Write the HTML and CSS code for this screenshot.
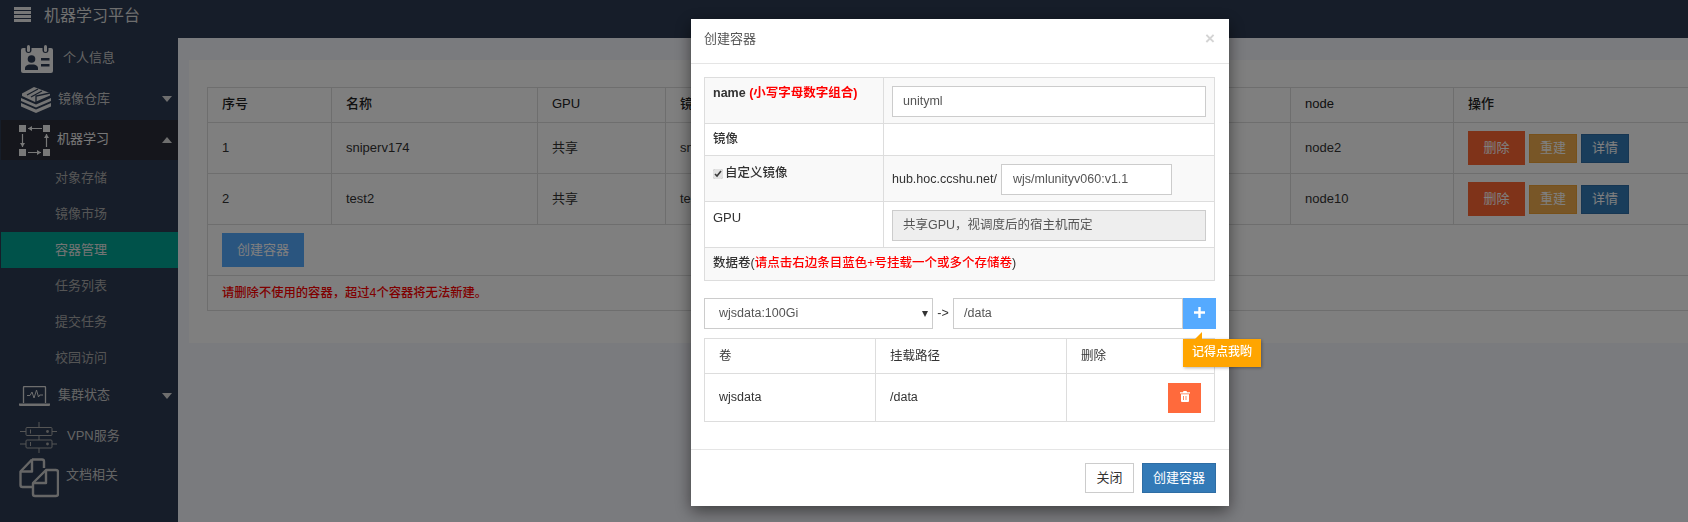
FILE: index.html
```html
<!DOCTYPE html>
<html lang="zh-CN">
<head>
    <meta charset="UTF-8">
    <meta name="viewport" content="width=device-width, initial-scale=1.0">
    <title>机器学习平台</title>
    <link rel="stylesheet" href="styles.css">
</head>
<body>
    <header class="topbar">
        <svg class="menu-icon" viewBox="0 0 17 15" width="17" height="15"><path d="M0 0h17v3H0zM0 4h17v3H0zM0 8h17v3H0zM0 12h17v3H0z" fill="#eee"/></svg>
        <span class="brand">机器学习平台</span>
    </header>
    <div class="layout">
        <aside class="sidebar">
            <a class="side-item side-info">
                <svg class="side-icon" width="32" height="28" viewBox="0 0 32 28"><rect y="3" width="32" height="25" rx="2" fill="#f4f4f4"/><rect x="4.500" y="-1" width="6" height="9" rx="3" fill="#2c3a52"/><rect x="21.500" y="-1" width="6" height="9" rx="3" fill="#2c3a52"/><rect x="6" y="0" width="3" height="7" rx="1.500" fill="#f4f4f4"/><rect x="23" y="0" width="3" height="7" rx="1.500" fill="#f4f4f4"/><circle cx="10.500" cy="14" r="3.800" fill="#2c3a52"/><path d="M4 25v-2c0-2 2-3 4-3.500h5c2 .5 4 1.500 4 3.500v2z" fill="#2c3a52"/><rect x="20" y="13" width="8.500" height="2.500" fill="#2c3a52"/><rect x="20" y="19" width="8.500" height="2.500" fill="#2c3a52"/></svg>
                <span>个人信息</span>
            </a>
            <a class="side-item side-repo">
                <svg class="side-icon" width="30" height="26" viewBox="0 0 30 26"><path d="M13 0l16 6v2.500L14 15 1 9V6.500z" fill="#e8e8e8"/><path d="M6 8l11-6M10 10l11-6M15 15V9l14-3" fill="none" stroke="#2c3a52" stroke-width="1.300"/><path d="M0 11l15 6.500L30 11v3l-15 6.500L0 14z" fill="#e8e8e8"/><path d="M0 16l15 6.500L30 16v3.500L15 26 0 19.500z" fill="#e8e8e8"/></svg>
                <span>镜像仓库</span>
                <i class="caret"></i>
            </a>
            <a class="side-item side-ml">
                <svg class="side-icon" width="31" height="31" viewBox="0 0 31 31"><path d="M0 0h7v7H0zM24 0h7v7h-7zM0 24h7v7H0zM24 24h7v7h-7z" fill="#f0f0f0"/><path d="M23 3.500H9M3.500 9v13M9 27.500h13M27.500 22V9" stroke="#f0f0f0" stroke-width="1.200"/><path d="M9 3.500l4-2.500v5zM3.500 22L1 18h5zM22 27.500L18 25v5zM27.500 9L25 13h5z" fill="#f0f0f0"/></svg>
                <span>机器学习</span>
                <i class="caret caret-up"></i>
            </a>
            <a class="side-sub">对象存储</a>
            <a class="side-sub">镜像市场</a>
            <a class="side-sub active">容器管理</a>
            <a class="side-sub">任务列表</a>
            <a class="side-sub">提交任务</a>
            <a class="side-sub">校园访问</a>
            <a class="side-item side-status">
                <svg class="side-icon" width="31" height="20" viewBox="0 0 31 20"><path d="M4.500 17V1.500a1 1 0 0 1 1-1h20a1 1 0 0 1 1 1V17" fill="none" stroke="#ddd" stroke-width="1.300"/><path d="M0 17.500h31V19a1 1 0 0 1-1 1H1a1 1 0 0 1-1-1z" fill="#ddd"/><path d="M8 9.500h3l2-3.500 2 6 2.500-8 2 7 1.200-2H24" fill="none" stroke="#ddd"/></svg>
                <span>集群状态</span>
                <i class="caret"></i>
            </a>
            <a class="side-item side-vpn">
                <svg class="side-icon" width="37" height="31" viewBox="0 0 37 31"><g fill="none" stroke="#aaa"><rect x="6" y="5.500" width="26" height="8" rx="1"/><rect x="6" y="18" width="26" height="8" rx="1"/><path d="M19 0v5.500M19 13.500V18M19 26v5M0 9.500h6M32 9.500h5M0 22h6M32 22h5M10.500 7.500v4M10.500 20v4"/></g><circle cx="27.500" cy="9.500" r="1.400" fill="#aaa"/><circle cx="27.500" cy="22" r="1.400" fill="#aaa"/></svg>
                <span>VPN服务</span>
            </a>
            <a class="side-item side-docs">
                <svg class="side-icon" width="40" height="40" viewBox="0 0 40 40"><g fill="none" stroke="#ccc" stroke-width="2.400" stroke-linejoin="round"><path d="M13 1.500h10a2 2 0 0 1 2 2V10M13 1.500L1.500 13.500V27a2 2 0 0 0 2 2H14"/><path d="M13 1.500v12H1.500"/><path d="M27 12h10a2 2 0 0 1 2 2v22a2 2 0 0 1-2 2H16a2 2 0 0 1-2-2V25z"/><path d="M27 12v13H14"/></g></svg>
                <span>文档相关</span>
            </a>
        </aside>
        <main class="content">
            <section class="panel">
                <table class="grid">
                    <colgroup><col class="c-no"><col class="c-name"><col class="c-gpu"><col class="c-image"><col class="c-node"><col class="c-ops"></colgroup>
                    <thead>
                        <tr><th>序号</th><th>名称</th><th>GPU</th><th>镜像</th><th>node</th><th>操作</th></tr>
                    </thead>
                    <tbody>
                        <tr>
                            <td>1</td><td>sniperv174</td><td>共享</td><td>snip</td><td>node2</td>
                            <td><button class="btn btn-del">删除</button><button class="btn btn-warn">重建</button><button class="btn btn-info">详情</button></td>
                        </tr>
                        <tr>
                            <td>2</td><td>test2</td><td>共享</td><td>test2</td><td>node10</td>
                            <td><button class="btn btn-del">删除</button><button class="btn btn-warn">重建</button><button class="btn btn-info">详情</button></td>
                        </tr>
                        <tr><td colspan="6" class="cell-create"><button class="btn btn-create">创建容器</button></td></tr>
                        <tr><td colspan="6" class="cell-note">请删除不使用的容器，超过4个容器将无法新建。</td></tr>
                    </tbody>
                </table>
            </section>
        </main>
    </div>

    <div class="backdrop"></div>

    <div class="modal">
        <div class="modal-head">
            <h4>创建容器</h4>
            <span class="close">×</span>
        </div>
        <div class="modal-body">
            <table class="form-table">
                <colgroup><col class="f-label"><col></colgroup>
                <tr class="odd">
                    <th><b>name</b> <b class="red">(小写字母数字组合)</b></th>
                    <td><input class="field" type="text" value="unityml"></td>
                </tr>
                <tr class="row-image">
                    <th>镜像</th>
                    <td></td>
                </tr>
                <tr class="odd">
                    <th><label class="check"><input type="checkbox" checked>自定义镜像</label></th>
                    <td><div class="custom"><span>hub.hoc.ccshu.net/</span><input class="field field-short" type="text" value="wjs/mlunityv060:v1.1"></div></td>
                </tr>
                <tr>
                    <th class="plain">GPU</th>
                    <td><input class="field" type="text" value="共享GPU，视调度后的宿主机而定" disabled></td>
                </tr>
                <tr class="odd row-volume">
                    <th colspan="2">数据卷(<b class="red">请点击右边条目蓝色+号挂载一个或多个存储卷</b>)</th>
                </tr>
            </table>

            <div class="mount">
                <div class="select">wjsdata:100Gi<i></i></div>
                <span class="arrow">-&gt;</span>
                <input class="field mount-path" type="text" value="/data">
                <button class="plus">
                    <svg width="11" height="11" viewBox="0 0 11 11"><path d="M4.300 0h2.400v4.300H11v2.400H6.700V11H4.300V6.700H0V4.300h4.300z" fill="#fff"/></svg>
                </button>
                <div class="tip">记得点我哟</div>
            </div>

            <table class="volumes">
                <colgroup><col class="v-a"><col class="v-b"><col></colgroup>
                <tr><th>卷</th><th>挂载路径</th><th>删除</th></tr>
                <tr>
                    <td>wjsdata</td><td>/data</td>
                    <td class="cell-trash">
                        <button class="trash">
                            <svg width="10" height="11" viewBox="0 0 10 11"><path d="M3.500 0h3l.6 1.200H10v1.300H0V1.200h2.900zM1 3.300h8V10a1 1 0 0 1-1 1H2a1 1 0 0 1-1-1zM3 5v4h.8V5zm2.600 0v4h.8V5z" fill="#fff" fill-rule="evenodd"/></svg>
                        </button>
                    </td>
                </tr>
            </table>
        </div>
        <div class="modal-foot">
            <button class="foot-btn foot-close">关闭</button>
            <button class="foot-btn foot-ok">创建容器</button>
        </div>
    </div>
</body>
</html>
```

FILE: styles.css
```css
* {
    box-sizing: border-box;
}
html, body {
    height: 100%;
}
body {
    margin: 0;
    overflow: hidden;
    background-color: #f5f6fc;
    font-family: "Liberation Sans", "Noto Sans CJK SC", sans-serif;
    font-size: 13px;
    line-height: 1.2;
    color: #333;
}
button {
    font-family: inherit;
}

/* top bar */
.topbar {
    height: 38px;
    display: flex;
    align-items: flex-start;
    padding: 7px 0 0 14px;
    background-color: #2c3a52;
}
.menu-icon {
    margin-right: 13px;
}
.brand {
    margin-top: -1px;
    font-size: 16px;
    color: #ddd;
}

/* sidebar */
.layout {
    display: flex;
    height: calc(100% - 38px);
}
.sidebar {
    width: 178px;
    flex: none;
    padding-left: 1px;
    background-color: #2c3a52;
    color: #c8c8c8;
}
.side-item {
    position: relative;
    height: 40px;
    display: flex;
    align-items: center;
}
.side-icon {
    flex: none;
}
.side-info {
    padding-left: 20px;
    gap: 10px;
}
.side-repo {
    height: 42px;
    padding-left: 20px;
    gap: 7px;
}
.side-info .side-icon, .side-repo .side-icon, .side-vpn .side-icon {
    margin-top: 2px;
}
.side-ml span, .side-status span, .side-docs span {
    padding-bottom: 2px;
}
.side-ml {
    padding-left: 18px;
    gap: 7px;
    background-color: #2a2c38;
    color: #f0f0f0;
}
.side-status {
    padding-left: 18px;
    gap: 8px;
}
.side-vpn {
    padding-left: 19px;
    gap: 10px;
}
.side-docs {
    padding-left: 18px;
    gap: 7px;
}
.side-docs .side-icon {
    margin-top: 4px;
}
.caret {
    position: absolute;
    right: 6px;
    top: 50%;
    margin-top: -3px;
    border-left: 5px solid transparent;
    border-right: 5px solid transparent;
    border-top: 6px solid #ddd;
}
.caret-up {
    border-top: 0;
    border-bottom: 6px solid #ddd;
}
.side-sub {
    display: block;
    height: 36px;
    line-height: 35px;
    padding-left: 54px;
    color: #aaa;
}
.side-sub.active {
    background-color: #00a594;
    color: #e8e8e8;
}

/* main area */
.content {
    flex: 1;
    min-width: 0;
    padding: 22px 0 0 11px;
    overflow: hidden;
}
.panel {
    width: 1520px;
    height: 283px;
    padding: 27px 18px;
    background-color: #fff;
}
.grid {
    width: 1500px;
    table-layout: fixed;
    border-collapse: collapse;
}
.c-no { width: 124px; }
.c-name { width: 206px; }
.c-gpu { width: 128px; }
.c-image { width: 625px; }
.c-node { width: 163px; }
.grid th, .grid td {
    border: 1px solid #ddd;
    padding: 0 14px;
    text-align: left;
}
.grid th {
    height: 35px;
    padding-bottom: 3px;
    font-weight: 500;
    color: #222;
}
.grid td {
    height: 51px;
}
.grid td.cell-note {
    height: 35px;
    color: #f00;
    font-size: 12.3px;
    font-weight: 500;
}
.btn {
    height: 29px;
    width: 48px;
    margin-right: 4px;
    padding: 0 0 3px;
    border: 1px solid transparent;
    font-size: 13px;
    color: #fff;
    vertical-align: middle;
}
.btn-del {
    width: 57px;
    height: 34px;
    background-color: #ff6633;
}
.btn-warn {
    background-color: #f0ad4e;
    border-color: #eea236;
}
.btn-info {
    background-color: #337ab7;
    border-color: #2e6da4;
}
.btn-create {
    width: 82px;
    height: 34px;
    background-color: #55aaff;
}

/* modal */
.backdrop {
    position: fixed;
    inset: 0;
    background-color: rgba(0, 0, 0, 0.5);
}
.modal {
    position: fixed;
    left: 691px;
    top: 19px;
    width: 538px;
    height: 487px;
    background-color: #fff;
    box-shadow: 0 5px 15px rgba(0, 0, 0, 0.5);
    font-size: 12.5px;
}
.modal-head {
    height: 45px;
    display: flex;
    align-items: center;
    justify-content: space-between;
    padding: 0 14px 4px 13px;
    border-bottom: 1px solid #e5e5e5;
}
.modal-head h4 {
    margin: 0;
    font-size: 13px;
    font-weight: normal;
    color: #555;
}
.close {
    font-size: 17px;
    font-weight: bold;
    color: #d4d4d4;
}
.modal-body {
    height: 385px;
    padding: 13px 14px 0 13px;
}
.form-table, .volumes {
    width: 511px;
    table-layout: fixed;
    border-collapse: collapse;
}
.f-label { width: 179px; }
.form-table th, .form-table td {
    border: 1px solid #ddd;
    padding: 8px 8px 6px;
    text-align: left;
    vertical-align: top;
}
.form-table .odd {
    background-color: #f9f9f9;
}
.form-table th {
    font-weight: 500;
}
.form-table th.plain {
    font-weight: normal;
    font-size: 13px;
}
.row-image th {
    height: 32px;
}
.row-volume th {
    height: 33px;
}
.red {
    color: #f00;
    font-weight: bold;
}
.row-volume .red {
    font-weight: 500;
}
.check {
    display: flex;
    align-items: center;
    padding-top: 2px;
}
.check input {
    margin: 0 2px 0 0;
    width: 10px;
    height: 10px;
    accent-color: #e2e2e2;
}
.field {
    display: block;
    width: 100%;
    height: 31px;
    padding: 0 10px 1px;
    border: 1px solid #ccc;
    font-family: inherit;
    font-size: 12.5px;
    color: #555;
    background-color: #fff;
}
.field:disabled {
    padding-bottom: 4px;
    background-color: #eee;
    color: #555;
}
.custom {
    display: flex;
    align-items: center;
    gap: 4px;
}
.field-short {
    width: 171px;
    flex: none;
    padding-left: 11px;
}

/* mount row */
.mount {
    position: relative;
    display: flex;
    align-items: center;
    margin-top: 17px;
    height: 31px;
    width: 512px;
}
.select {
    position: relative;
    width: 229px;
    height: 31px;
    line-height: 29px;
    padding-left: 14px;
    border: 1px solid #ccc;
    color: #555;
}
.select i {
    position: absolute;
    right: 4px;
    top: 12px;
    border-left: 3px solid transparent;
    border-right: 3px solid transparent;
    border-top: 6px solid #333;
}
.arrow {
    width: 20px;
    text-align: center;
}
.mount-path {
    width: 230px;
}
.plus {
    width: 33px;
    height: 31px;
    padding: 0;
    border: 0;
    background-color: #55aaff;
    flex: none;
}
.tip {
    position: absolute;
    left: 479px;
    top: 41px;
    width: 78px;
    height: 28px;
    padding-bottom: 2px;
    line-height: 26px;
    text-align: center;
    background-color: #ffa500;
    color: #fff;
    font-weight: 500;
    font-size: 12px;
    box-shadow: 1px 1px 3px rgba(0, 0, 0, 0.3);
}
.tip::before {
    content: "";
    position: absolute;
    left: 12px;
    top: -7px;
    border-left: 7px solid transparent;
    border-bottom: 7px solid #ffa500;
}

/* volumes table */
.volumes {
    margin-top: 9px;
}
.v-a { width: 171px; }
.v-b { width: 191px; }
.volumes th, .volumes td {
    border: 1px solid #ddd;
    padding: 0 14px;
    text-align: left;
    font-weight: normal;
}
.volumes th {
    height: 35px;
}
.volumes td {
    height: 48px;
}
.volumes td.cell-trash {
    text-align: right;
    padding-right: 13px;
}
.trash {
    width: 33px;
    height: 30px;
    padding: 0;
    border: 0;
    background-color: #ff6a3c;
    vertical-align: middle;
}

/* modal footer */
.modal-foot {
    height: 57px;
    display: flex;
    align-items: center;
    justify-content: flex-end;
    gap: 8px;
    padding-right: 13px;
    border-top: 1px solid #e5e5e5;
}
.foot-btn {
    height: 30px;
    padding: 0 0 3px;
    border: 1px solid #ccc;
    font-size: 13px;
    color: #333;
    background-color: #fff;
}
.foot-close {
    width: 49px;
}
.foot-ok {
    width: 74px;
    background-color: #337ab7;
    border-color: #2e6da4;
    color: #fff;
}
```
